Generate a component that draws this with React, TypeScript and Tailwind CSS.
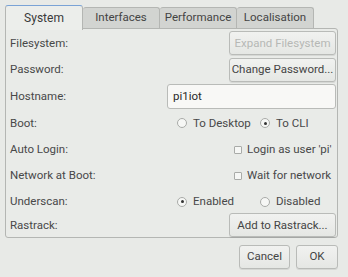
import React from 'react'

const tabs = ['System', 'Interfaces', 'Performance', 'Localisation']

function Radio({ checked, label }: { checked?: boolean; label: string }) {
  return (
    <span className="flex items-center gap-[6px]">
      <span className="w-[10px] h-[10px] rounded-full border border-[#a9aba8] bg-[#f6f7f5] flex items-center justify-center">
        {checked && <span className="w-[3px] h-[3px] rounded-full bg-[#333]" />}
      </span>
      <span>{label}</span>
    </span>
  )
}

function Check({ label }: { label: string }) {
  return (
    <span className="flex items-center gap-[5px]">
      <span className="w-[8px] h-[8px] rounded-[1px] border border-[#a9aba8] bg-[#f6f7f5]" />
      <span>{label}</span>
    </span>
  )
}

function Btn({ children, disabled, className }: { children: React.ReactNode; disabled?: boolean; className?: string }) {
  return (
    <div
      className={
        'h-[24px] flex items-center justify-center whitespace-nowrap rounded-[3px] border border-[#b9bbb8] bg-gradient-to-b from-[#f1f2f0] to-[#e5e7e4] shadow-[0_1px_0_rgba(0,0,0,0.08)] ' +
        (disabled ? 'text-[#b6b8b5] ' : 'text-[#444] ') +
        (className || '')
      }
    >
      {children}
    </div>
  )
}

function Row({ label, h, children }: { label: string; h: string; children: React.ReactNode }) {
  return (
    <div className={'flex items-center justify-between ' + h}>
      <span>{label}</span>
      {children}
    </div>
  )
}

export default function App() {
  return (
    <div
      className="w-[348px] h-[277px] bg-[#e8eae7] text-[11.5px] text-[#484848] pt-[5px] pl-[5px] pr-[10px] flex flex-col"
      style={{ fontFamily: 'Roboto, "Liberation Sans", sans-serif' }}
    >
      <div className="flex items-end h-[23px] relative z-10">
        {tabs.map((t, i) =>
          i === 0 ? (
            <div
              key={t}
              className="w-[78px] h-[25px] -mb-[2px] flex items-center justify-center text-[12px] rounded-t-[3px] border border-b-0 border-[#b4b6b3] border-t-[#7aa3d6] bg-[#eceeeb] text-[#3a3a3a]"
            >
              {t}
            </div>
          ) : (
            <div
              key={t}
              className="w-[77px] h-[21px] flex items-center justify-center text-[11.5px] rounded-t-[3px] border border-b-0 border-l-0 border-[#b4b6b3] bg-[#d2d4d1] text-[#444]"
            >
              {t}
            </div>
          )
        )}
      </div>
      <div className="h-[210px] border border-[#b4b6b3] rounded-b-[3px] rounded-tr-[3px] bg-[#e9ebe8] pl-[4px] pr-[1px] pt-[1px] flex flex-col">
        <Row label="Filesystem:" h="h-[27px]">
          <Btn disabled className="w-[107px]">Expand Filesystem</Btn>
        </Row>
        <Row label="Password:" h="h-[27px]">
          <Btn className="w-[107px]">Change Password...</Btn>
        </Row>
        <Row label="Hostname:" h="h-[27px]">
          <div className="w-[169px] h-[25px] border border-[#b9bbb8] rounded-[3px] bg-[#f8f8f6] flex items-center px-[5px] text-[#2a2a2a]">
            pi1iot
          </div>
        </Row>
        <Row label="Boot:" h="h-[27px]">
          <div className="flex w-[159px]">
            <div className="w-[83px]"><Radio label="To Desktop" /></div>
            <Radio checked label="To CLI" />
          </div>
        </Row>
        <Row label="Auto Login:" h="h-[26px]">
          <div className="w-[102px]"><Check label="Login as user 'pi'" /></div>
        </Row>
        <Row label="Network at Boot:" h="h-[27px]">
          <div className="w-[102px]"><Check label="Wait for network" /></div>
        </Row>
        <Row label="Underscan:" h="h-[25px]">
          <div className="flex w-[159px]">
            <div className="w-[83px]"><Radio checked label="Enabled" /></div>
            <Radio label="Disabled" />
          </div>
        </Row>
        <Row label="Rastrack:" h="h-[23px]">
          <Btn className="w-[107px]">Add to Rastrack...</Btn>
        </Row>
      </div>
      <div className="flex justify-end gap-[6px] mt-[7px]">
        <Btn className="w-[51px]">Cancel</Btn>
        <Btn className="w-[42px]">OK</Btn>
      </div>
    </div>
  )
}
